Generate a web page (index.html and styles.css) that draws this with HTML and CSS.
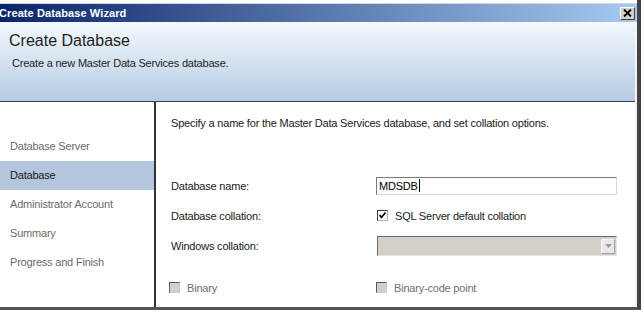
FILE: index.html
```html
<!DOCTYPE html>
<html lang="en">
<head>
  <meta charset="UTF-8" />
  <title>Create Database Wizard</title>
  <link rel="stylesheet" href="styles.css">
</head>
<body>
  <div class="window">
    <div class="behind"></div>

    <div class="titlebar">
      <span class="title">Create Database Wizard</span>
      <button class="close-btn">
        <svg width="9" height="8" viewBox="0 0 9 8"><path d="M1 0.5 L8 7.5 M8 0.5 L1 7.5" stroke="#000" stroke-width="1.8"/></svg>
      </button>
    </div>

    <div class="inner">
      <!-- Header -->
      <div class="header">
        <h1>Create Database</h1>
        <p>Create a new Master Data Services database.</p>
      </div>

      <div class="main">
        <!-- Wizard steps -->
        <ul class="steps">
          <li>Database Server</li>
          <li class="active">Database</li>
          <li>Administrator Account</li>
          <li>Summary</li>
          <li>Progress and Finish</li>
        </ul>

        <!-- Step content -->
        <div class="content">
          <p class="intro">Specify a name for the Master Data Services database, and set collation options.</p>

          <div class="form">
            <label>Database name:</label>
            <div class="textbox">MDSDB<span class="caret"></span></div>

            <label>Database collation:</label>
            <div class="checkrow">
              <span class="check checked">
                <svg width="9" height="9" viewBox="0 0 9 9"><path d="M1.5 4 L3.5 6.5 L7.5 1.5" fill="none" stroke="#000" stroke-width="1.7"/></svg>
              </span>
              SQL Server default collation
            </div>

            <label>Windows collation:</label>
            <div class="combo">
              <span class="combo-arrow">
                <svg width="7" height="4" viewBox="0 0 7 4"><path d="M0 0 H7 L3.5 4 Z" fill="#9a9a9a"/></svg>
              </span>
            </div>

            <div class="checkrow disabled opt-left"><span class="check"></span>Binary</div>
            <div class="checkrow disabled opt"><span class="check"></span>Binary-code point</div>
          </div>
        </div>
      </div>
    </div>
  </div>
</body>
</html>
```

FILE: styles.css
```css
* {
  margin: 0;
  padding: 0;
  box-sizing: border-box;
}

body {
  background: #fff;
  font-family: 'Liberation Sans', Arial, sans-serif;
  font-size: 11px;
  letter-spacing: -0.2px;
  color: #1a1a1a;
  width: 644px;
  height: 313px;
  overflow: hidden;
}

.window {
  width: 641px;
  height: 310px;
  border-right: 4px solid #444;
  border-bottom: 3px solid #555;
  display: flex;
  flex-direction: column;
}

.behind {
  height: 4px;
  background: #fff;
  border-bottom: 1px solid #d6d6d6;
}

.titlebar {
  height: 18px;
  background: linear-gradient(to right, #0a246a, #a6caf0);
  display: flex;
  align-items: center;
  justify-content: space-between;
  padding-right: 2px;
}

.title {
  color: #fff;
  font-weight: bold;
  font-size: 11px;
  margin-left: -1px;
  letter-spacing: 0.1px;
}

.close-btn {
  width: 15px;
  height: 13px;
  background: #d4d0c8;
  border: 1px solid;
  border-color: #fff #404040 #404040 #fff;
  display: flex;
  align-items: center;
  justify-content: center;
}

.inner {
  flex: 1;
  display: flex;
  flex-direction: column;
  border-right: 2px solid #f4f4f4;
}

.header {
  height: 80px;
  background: linear-gradient(to bottom, #f3f9fe, #b7cbe3);
  border-bottom: 1px solid #3c4150;
  padding: 9px 0 0 9px;
}

.header h1 {
  font-size: 16px;
  font-weight: normal;
  letter-spacing: 0;
  color: #1e1e1e;
  line-height: 20px;
}

.header p {
  margin: 6px 0 0 3px;
  color: #1e1e1e;
}

.main {
  flex: 1;
  display: flex;
}

.steps {
  list-style: none;
  width: 156px;
  border-right: 2px solid #333;
  padding-top: 30px;
}

.steps li {
  height: 29px;
  line-height: 29px;
  padding-left: 10px;
  color: #6b6b6b;
}

.steps li.active {
  background: #b4c6dd;
  color: #1a1a1a;
}

.content {
  flex: 1;
  padding: 14px 0 0 15px;
}

.intro {
  line-height: 14px;
  margin-bottom: 46px;
}

.form {
  display: grid;
  grid-template-columns: 205px 241px;
  grid-template-rows: 19px 19px 20px 20px;
  row-gap: 11px;
  align-items: center;
}

.textbox {
  height: 18px;
  background: #fff;
  border: 1px solid;
  border-color: #7a7a7a #d8d8d8 #d8d8d8 #7a7a7a;
  padding-left: 2px;
  display: flex;
  align-items: center;
  color: #000;
}

.caret {
  width: 1px;
  height: 13px;
  background: #000;
  margin-left: 1px;
}

.checkrow {
  display: flex;
  align-items: center;
  padding-left: 1px;
}

.check {
  width: 11px;
  height: 11px;
  border: 1px solid;
  border-color: #5a5a5a #c8c8c8 #c8c8c8 #5a5a5a;
  background: #d4d0c8;
  margin-right: 7px;
  display: flex;
  align-items: center;
  justify-content: center;
}

.check.checked {
  background: #fff;
  border-color: #3a3a3a #b0b0b0 #b0b0b0 #3a3a3a;
}

.checkrow.disabled {
  color: #6e6e6e;
}

.opt-left {
  margin: 21px 0 0 -3px;
}

.opt {
  margin-top: 21px;
  padding-left: 0;
}

.combo {
  height: 20px;
  margin-left: 1px;
  background: #d4d0c8;
  border: 1px solid;
  border-color: #6a6a6a #e4e4e4 #e4e4e4 #6a6a6a;
  display: flex;
  justify-content: flex-end;
  align-items: center;
  padding-right: 1px;
}

.combo-arrow {
  width: 14px;
  height: 15px;
  background: #ebe9e5;
  border: 1px solid;
  border-color: #f8f8f8 #a0a0a0 #a0a0a0 #f8f8f8;
  display: flex;
  align-items: center;
  justify-content: center;
}
```
